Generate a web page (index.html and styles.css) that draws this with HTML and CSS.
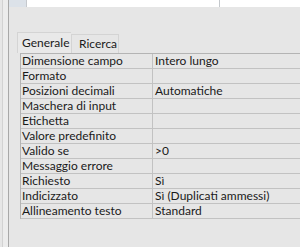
FILE: index.html
```html
<!DOCTYPE html>
<html lang="it">
  <head>
    <meta charset="UTF-8" />
    <title>Proprietà campo</title>
    <link rel="stylesheet" href="styles.css">
  </head>
  <body>
    <div class="frame">
      <div class="gutter"></div>
      <div class="main">
        <div class="top">
          <div class="selector"></div>
          <div class="cell-a"></div>
          <div class="cell-b"></div>
        </div>
        <div class="panel">
          <div class="tabs">
            <div class="tab active">Generale</div>
            <div class="tab">Ricerca</div>
          </div>
          <div class="props">
            <div class="name">Dimensione campo</div><div class="val">Intero lungo</div>
            <div class="name">Formato</div><div class="val"></div>
            <div class="name">Posizioni decimali</div><div class="val">Automatiche</div>
            <div class="name">Maschera di input</div><div class="val"></div>
            <div class="name">Etichetta</div><div class="val"></div>
            <div class="name">Valore predefinito</div><div class="val"></div>
            <div class="name">Valido se</div><div class="val">&gt;0</div>
            <div class="name">Messaggio errore</div><div class="val"></div>
            <div class="name">Richiesto</div><div class="val">Sì</div>
            <div class="name">Indicizzato</div><div class="val">Sì (Duplicati ammessi)</div>
            <div class="name">Allineamento testo</div><div class="val">Standard</div>
          </div>
        </div>
      </div>
    </div>
  </body>
</html>
```

FILE: styles.css
```css
body {
  margin: 0;
  width: 300px;
  height: 247px;
  overflow: hidden;
  background: #e6e6e6;
  font-family: "Lato", "Noto Sans", sans-serif;
  font-size: 12px;
  color: #1a1a1a;
}

.frame {
  display: flex;
  height: 247px;
}

.gutter {
  width: 5px;
  margin-left: 2px;
  border-left: 1px solid #d2d2d2;
  border-right: 1px solid #a8a8a8;
  background: #ececec;
}

.main {
  flex: 1;
  display: flex;
  flex-direction: column;
  min-width: 0;
}

.top {
  display: flex;
  height: 7px;
}

.selector {
  width: 17px;
  background: #dce2e9;
  border-right: 1px solid #c6c9cd;
}

.cell-a {
  width: 192px;
  background: #fff;
  border-right: 1px solid #c4c8cc;
}

.cell-b {
  flex: 1;
  background: #fff;
}

.panel {
  padding: 25px 0 0 8px;
}

.tabs {
  display: flex;
  align-items: flex-end;
  height: 21px;
}

.tab {
  box-sizing: border-box;
  height: 19px;
  padding: 2px 0 0 7px;
  width: 48px;
  border: 1px solid #d4d4d4;
  border-bottom: none;
  line-height: 14px;
}

.tab.active {
  height: 21px;
  width: 54px;
  padding: 3px 0 0 4px;
  background: #e9e9e9;
  border-right: none;
}

.props {
  display: grid;
  grid-template-columns: 132px 1fr;
  margin-left: 3px;
  border-top: 1px solid #b4b4b4;
  border-left: 1px solid #b4b4b4;
}

.name,
.val {
  height: 14px;
  line-height: 14px;
  border-bottom: 1px solid #c2c2c2;
  white-space: nowrap;
  overflow: hidden;
}

.name {
  padding-left: 1px;
  border-right: 1px solid #c2c2c2;
}

.val {
  padding-left: 2px;
}
```
